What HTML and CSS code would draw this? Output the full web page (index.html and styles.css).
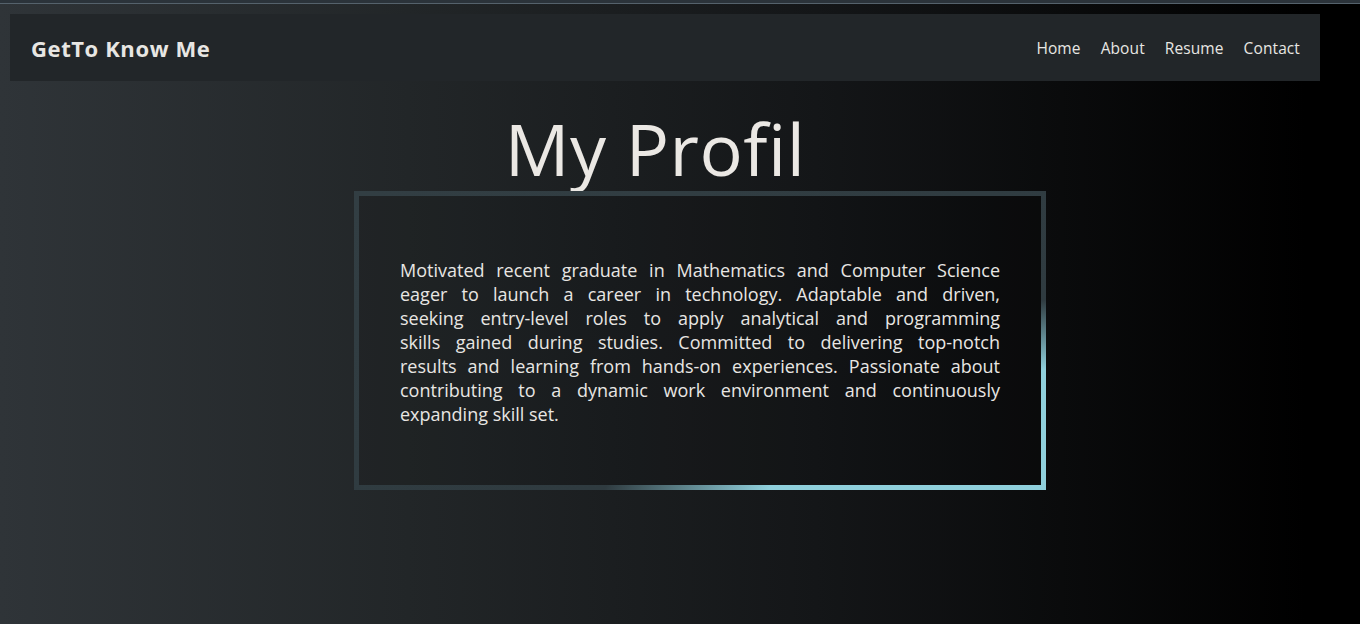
FILE: index.html
```html
<!DOCTYPE html>
<html lang="en">
<head>
<meta charset="utf-8">
<title>GetTo Know Me</title>
<link rel="stylesheet" href="styles.css">
</head>
<body>
<div class="topline"></div>
<nav class="navbar">
  <a class="brand" href="#">GetTo Know Me</a>
  <ul class="nav-links">
    <li><a href="#">Home</a></li>
    <li><a href="#">About</a></li>
    <li><a href="#">Resume</a></li>
    <li><a href="#">Contact</a></li>
  </ul>
</nav>
<main class="profile">
  <h1 class="title">My Profil</h1>
  <section class="card">
    <p class="bio">
      <span class="line">Motivated recent graduate in Mathematics and Computer Science</span>
      <span class="line">eager to launch a career in technology. Adaptable and driven,</span>
      <span class="line">seeking entry-level roles to apply analytical and programming</span>
      <span class="line">skills gained during studies. Committed to delivering top-notch</span>
      <span class="line">results and learning from hands-on experiences. Passionate about</span>
      <span class="line">contributing to a dynamic work environment and continuously</span>
      <span class="line last">expanding skill set.</span>
    </p>
  </section>
</main>
</body>
</html>
```
FILE: styles.css
```css
* { box-sizing: border-box; }
html, body { height: 100%; }
body {
  margin: 0;
  font-family: "Open Sans", "Noto Sans", sans-serif;
  color: #e8e6e3;
  background: linear-gradient(to right, #2f3438 0%, #222628 30%, #141618 60%, #000 96%);
  overflow: hidden;
}
.topline {
  height: 4px;
  background: #2b333a;
  border-bottom: 1px solid #55626c;
}
.navbar {
  margin: 10px 40px 0 10px;
  height: 67px;
  background: #222629;
  display: flex;
  align-items: center;
  justify-content: space-between;
  padding: 0 20px 0 21px;
}
.brand {
  color: #e8e6e3;
  text-decoration: none;
  font-weight: 700;
  font-size: 22px;
  letter-spacing: 0.6px;
}
.nav-links {
  list-style: none;
  display: flex;
  gap: 20px;
  margin: 0;
  padding: 0;
}
.nav-links a {
  color: #e8e6e3;
  text-decoration: none;
  font-size: 15.5px;
  letter-spacing: 0.1px;
}
.profile {
  display: flex;
  flex-direction: column;
  align-items: center;
}
.title {
  margin: 28px 50px 0 0;
  font-weight: 400;
  font-size: 72px;
  line-height: 79px;
  letter-spacing: 0.5px;
  color: #ebe8e4;
}
.card {
  margin: 3px 0 0 40px;
  width: 692px;
  height: 299px;
  border: 5px solid transparent;
  border-image: linear-gradient(to bottom right, #323e43 0%, #2f3b40 68%, #8fd0dc 80%, #8fd0dc 100%) 1;
  background: rgba(0, 0, 0, 0.08);
  padding: 62px 41px 0;
}
.bio {
  margin: 0;
  font-size: 18px;
  line-height: 24px;
  letter-spacing: 0;
}
.line {
  display: block;
  text-align: justify;
  text-align-last: justify;
  white-space: nowrap;
}
.line.last {
  text-align-last: left;
}
```
